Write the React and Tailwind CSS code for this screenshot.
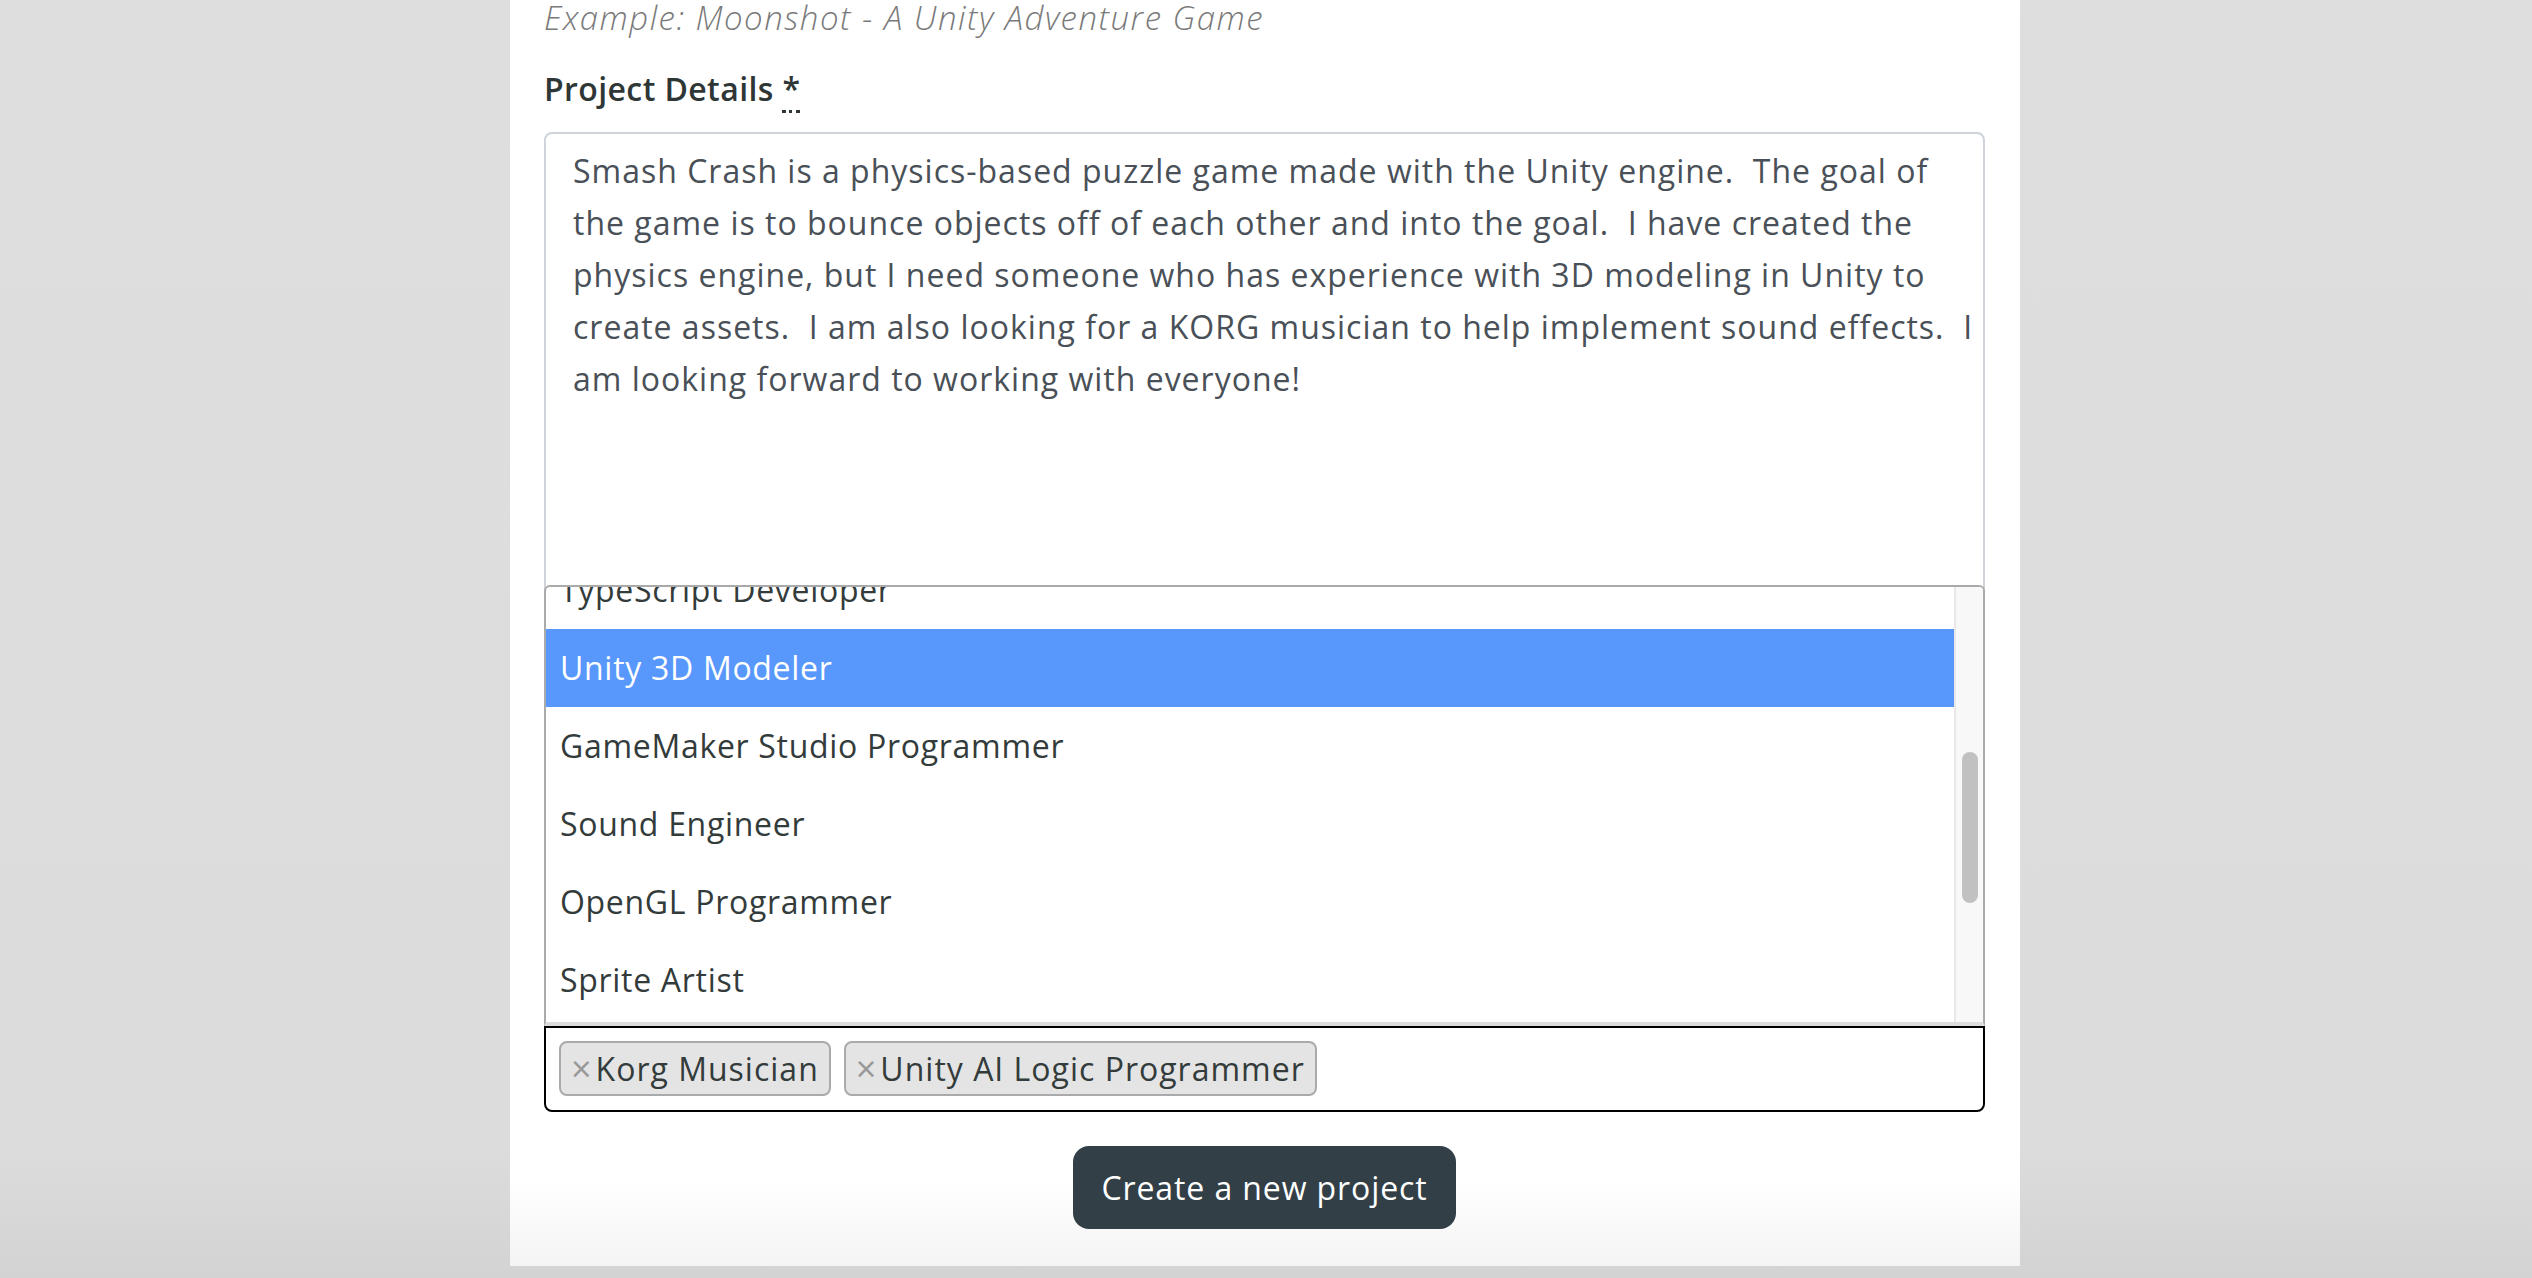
import React from 'react';

const FONT = { fontFamily: '"Open Sans", "Noto Sans", sans-serif' };

const DETAILS = [
    'Smash Crash is a physics-based puzzle game made with the Unity engine.  The goal of',
    'the game is to bounce objects off of each other and into the goal.  I have created the',
    'physics engine, but I need someone who has experience with 3D modeling in Unity to',
    'create assets.  I am also looking for a KORG musician to help implement sound effects.  I',
    'am looking forward to working with everyone!',
];

const OPTIONS = [
    'TypeScript Developer',
    'Unity 3D Modeler',
    'GameMaker Studio Programmer',
    'Sound Engineer',
    'OpenGL Programmer',
    'Sprite Artist',
];

const SELECTED = ['Korg Musician', 'Unity AI Logic Programmer'];

const App = () => {
    return (
        <div
            className="w-full h-[1278px] overflow-hidden bg-[linear-gradient(to_bottom,#dedede_0%,#dcdcdc_90%,#d3d3d3_100%)]"
            style={FONT}
        >
            <div className="ml-[510px] w-[1510px] h-[1266px] overflow-hidden bg-[linear-gradient(to_bottom,#ffffff_0%,#ffffff_93%,#f4f4f4_100%)] pl-[34px] pr-[35px]">
                <p className="-mt-[9px] h-[54px] leading-[54px] text-[33px] italic font-light text-[#7a7a7a] whitespace-pre tracking-[1.5px]">
                    Example: Moonshot - A Unity Adventure Game
                </p>

                <label className="block mt-[18px] h-[52px] leading-[52px] text-[32px] font-semibold tracking-[0.4px] text-[#2f3636]">
                    Project Details{' '}
                    <abbr className="no-underline border-b-[3px] border-dotted border-[#2f3636]" title="required">*</abbr>
                </label>

                <div className="mt-[17px] h-[888px] border-2 border-[#ced4da] rounded-[8px] px-[27px] pt-[11px] text-[32px] leading-[52px] tracking-[1px] text-[#495057] whitespace-pre">
                    {DETAILS.map((line, i) => (
                        <div key={i}>{line}</div>
                    ))}
                </div>

                <div className="relative">
                    {/* dropdown list opened above the selection */}
                    <div className="absolute bottom-full left-0 right-0 h-[441px] bg-white border-2 border-b-4 border-[#aaaaaa] border-b-[#dddddd] rounded-t-[6px] flex overflow-hidden">
                        <ul className="flex-1 overflow-hidden">
                            <div className="-mt-[36px]">
                                {OPTIONS.map((opt, i) => (
                                    <li
                                        key={opt}
                                        className={`h-[78px] flex items-center pl-[14px] text-[32px] tracking-[0.7px] ${i === 1 ? 'bg-[#5897fb] text-white' : 'text-[#333b3b]'}`}
                                    >
                                        {opt}
                                    </li>
                                ))}
                            </div>
                        </ul>
                        <div className="w-[29px] bg-[#f8f8f8] border-l-2 border-[#e8e8e8] pt-[165px] flex justify-center">
                            <div className="w-[16px] h-[151px] rounded-full bg-[#c1c1c1]" />
                        </div>
                    </div>

                    <div className="mt-[6px] h-[86px] border-2 border-black rounded-b-[8px] flex items-start gap-[13px] pl-[13px] pt-[13px]">
                        {SELECTED.map(item => (
                            <span
                                key={item}
                                className="h-[55px] flex items-center bg-[#e4e4e4] border-2 border-[#aaaaaa] rounded-[8px] pl-[10px] pr-[10px] text-[32px] tracking-[1px] text-[#333b3b]"
                            >
                                <span className="text-[#999999] text-[36px] leading-none mr-[3px]">×</span>
                                {item}
                            </span>
                        ))}
                    </div>
                </div>

                <div className="flex justify-center mt-[34px]">
                    <button className="h-[83px] px-[28px] rounded-[16px] bg-[#323f47] text-white text-[32px] tracking-[0.9px]">
                        Create a new project
                    </button>
                </div>
            </div>
        </div>
    );
};

export default App;
